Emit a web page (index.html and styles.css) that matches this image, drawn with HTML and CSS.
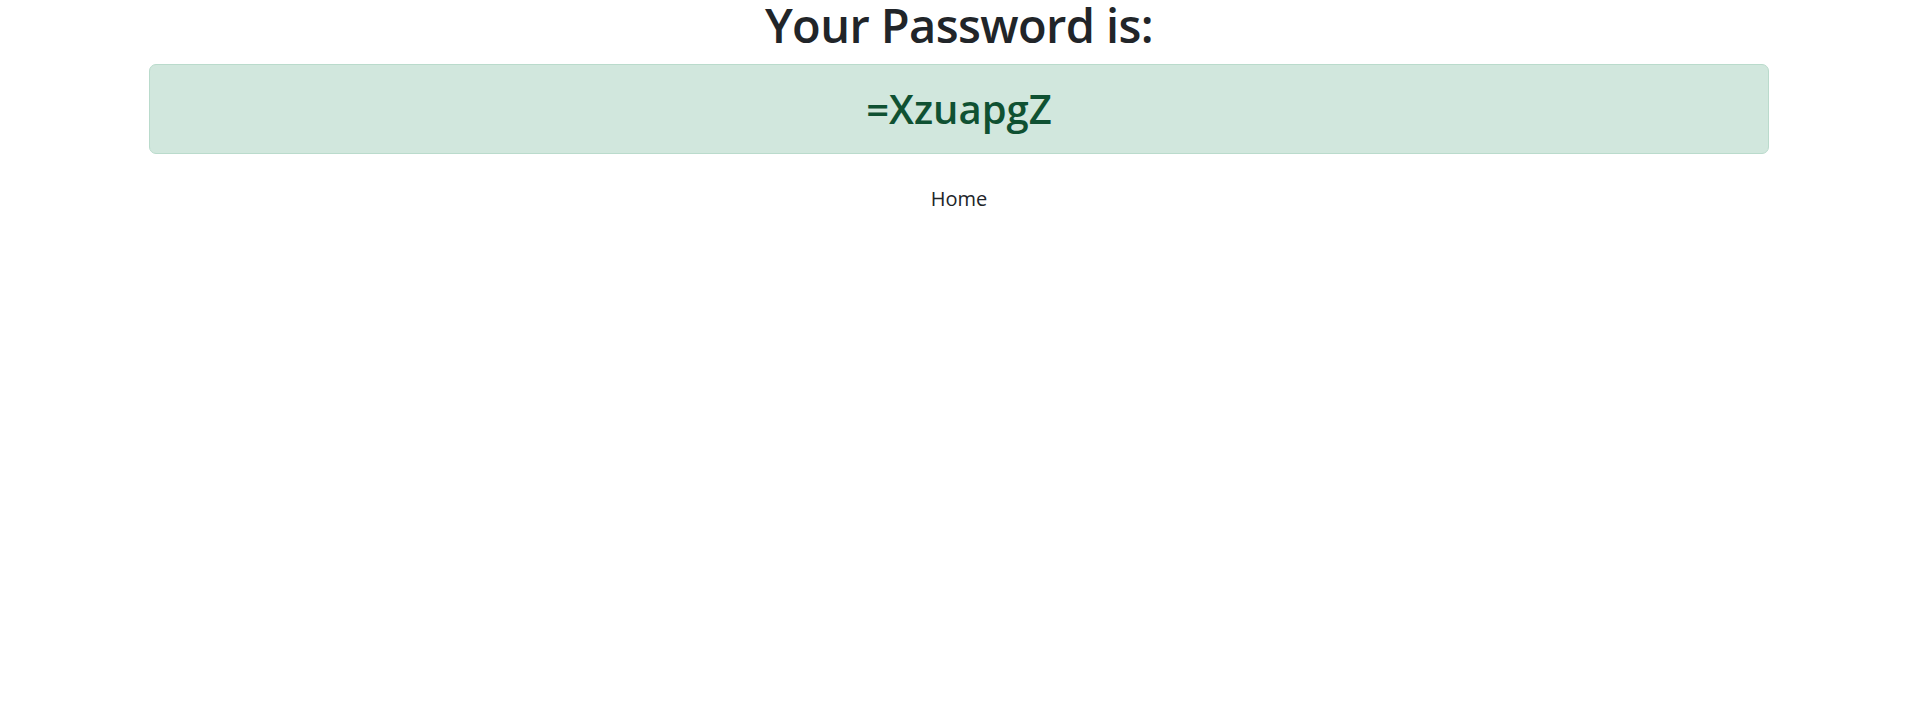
FILE: index.html
```html
<!DOCTYPE html>
<html lang="en">
<head>
<meta charset="utf-8">
<title>Password</title>
<link rel="stylesheet" href="styles.css">
</head>
<body>
<main class="page">
  <h1 class="title">Your Password is:</h1>
  <div class="alert">
    <h2 class="password">=XzuapgZ</h2>
  </div>
  <nav class="links">
    <a class="home" href="#">Home</a>
  </nav>
</main>
</body>
</html>
```
FILE: styles.css
```css
html, body {
  margin: 0;
  padding: 0;
  background: #fff;
}
body {
  font-family: "Open Sans", "Noto Sans", sans-serif;
  color: #212529;
  font-size: 20px;
  line-height: 1.5;
}
.page {
  display: flex;
  flex-direction: column;
  align-items: stretch;
  padding: 0 149px;
}
.title {
  margin: 0 0 14px;
  font-size: 47px;
  font-weight: 600;
  line-height: 50px;
  letter-spacing: -0.6px;
  text-align: center;
  color: #212529;
}
.alert {
  background: #d1e7dd;
  border: 1px solid #badbcc;
  border-radius: 7px;
  padding: 20px;
  color: #0f5132;
  text-align: center;
}
.password {
  margin: 0;
  font-size: 40px;
  font-weight: 600;
  line-height: 48px;
}
.links {
  display: flex;
  justify-content: center;
  padding-top: 30px;
}
.home {
  color: #212529;
  text-decoration: none;
}
```
